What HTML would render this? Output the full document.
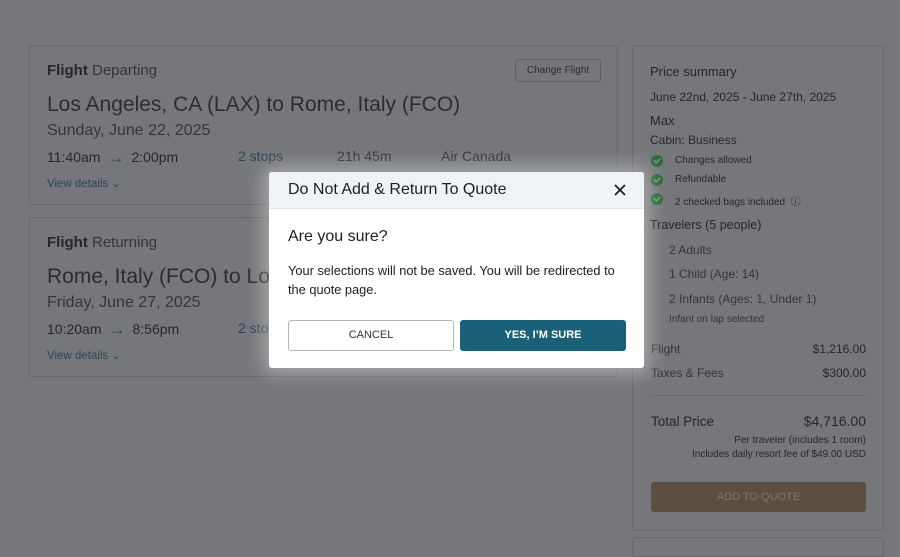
<!DOCTYPE html>
<html><head><style>
*{box-sizing:border-box;margin:0;padding:0}
body{width:900px;height:547px;overflow:hidden;background:#76777b;font-family:"Liberation Sans",sans-serif;color:#26272a;position:relative}
.card{position:absolute;border:1px solid #67686c;border-radius:3px;background:#76777b}
.abs{position:absolute;white-space:nowrap}
.g{color:#35363a}
.link{color:#2c4756}
.chk{position:absolute;width:12px;height:12px;border-radius:50%;background:#2f6b3c}
.chk:after{content:"";position:absolute;left:3px;top:3px;width:5px;height:3px;border-left:1.5px solid #9aaa9c;border-bottom:1.5px solid #9aaa9c;transform:rotate(-45deg)}
.modal{position:absolute;left:269px;top:172px;width:375px;height:196px;background:#fff;border-radius:3px;box-shadow:0 0 18px 6px rgba(255,255,255,.35)}
.arr{font-size:17px;margin:0 7px;vertical-align:-1px}
</style></head><body>
<div class="card" style="left:29px;top:45px;width:589px;height:160px"></div>
<div class="abs" style="left:47px;top:62px;font-size:15px"><span style="font-weight:600">Flight</span> <span class="g">Departing</span></div>
<div class="abs" style="left:515px;top:59px;width:86px;height:23px;border:1px solid #5f6064;border-radius:3px;font-size:10px;text-align:center;line-height:21px;color:#2c2d30">Change Flight</div>
<div class="abs" style="left:47px;top:93px;font-size:21px;color:#2c2d30">Los Angeles, CA (LAX) to Rome, Italy (FCO)</div>
<div class="abs g" style="left:47px;top:122px;font-size:16px">Sunday, June 22, 2025</div>
<div class="abs" style="left:47px;top:148px;font-size:14px">11:40am<span class="link arr">→</span>2:00pm</div>
<div class="abs link" style="left:238px;top:148px;font-size:14px">2 stops</div>
<div class="abs g" style="left:337px;top:148px;font-size:14px">21h 45m</div>
<div class="abs g" style="left:441px;top:148px;font-size:14px">Air Canada</div>
<div class="abs link" style="left:47px;top:176px;font-size:11.5px">View details &#8964;</div>

<div class="card" style="left:29px;top:217px;width:589px;height:160px"></div>
<div class="abs" style="left:47px;top:234px;font-size:15px"><span style="font-weight:600">Flight</span> <span class="g">Returning</span></div>
<div class="abs" style="left:47px;top:265px;font-size:21px;color:#2c2d30">Rome, Italy (FCO) to Lo</div>
<div class="abs g" style="left:47px;top:294px;font-size:16px">Friday, June 27, 2025</div>
<div class="abs" style="left:47px;top:320px;font-size:14px">10:20am<span class="link arr">→</span>8:56pm</div>
<div class="abs link" style="left:238px;top:320px;font-size:14px">2 sto</div>
<div class="abs link" style="left:47px;top:348px;font-size:11.5px">View details &#8964;</div>

<div class="card" style="left:632px;top:45px;width:252px;height:486px"></div>
<div class="card" style="left:632px;top:537px;width:252px;height:20px"></div>
<div class="abs" style="left:650px;top:64px;font-size:13px">Price summary</div>
<div class="abs" style="left:650px;top:90px;font-size:12px">June 22nd, 2025 - June 27th, 2025</div>
<div class="abs" style="left:650px;top:113px;font-size:13px">Max</div>
<div class="abs" style="left:650px;top:133px;font-size:12px">Cabin: Business</div>
<div class="chk" style="left:651px;top:155px"></div><div class="abs" style="left:675px;top:155px;font-size:10px">Changes allowed</div>
<div class="chk" style="left:651px;top:174px"></div><div class="abs" style="left:675px;top:174px;font-size:10px">Refundable</div>
<div class="chk" style="left:651px;top:193px"></div><div class="abs" style="left:675px;top:193px;font-size:10px">2 checked bags included &nbsp;ⓘ</div>
<div class="abs" style="left:650px;top:218px;font-size:12.5px">Travelers (5 people)</div>
<div class="abs g" style="left:669px;top:243px;font-size:12px">2 Adults</div>
<div class="abs g" style="left:669px;top:267px;font-size:12px">1 Child (Age: 14)</div>
<div class="abs g" style="left:669px;top:292px;font-size:12px">2 Infants (Ages: 1, Under 1)</div>
<div class="abs g" style="left:669px;top:314px;font-size:10px">Infant on lap selected</div>
<div class="abs g" style="left:651px;top:342px;font-size:12px">Flight</div>
<div class="abs" style="left:700px;top:342px;width:166px;text-align:right;font-size:12px">$1,216.00</div>
<div class="abs g" style="left:651px;top:366px;font-size:12px">Taxes &amp; Fees</div>
<div class="abs" style="left:700px;top:366px;width:166px;text-align:right;font-size:12px">$300.00</div>
<div class="abs" style="left:650px;top:395px;width:216px;height:1px;background:#67686c"></div>
<div class="abs" style="left:651px;top:414px;font-size:13.5px">Total Price</div>
<div class="abs" style="left:700px;top:413px;width:166px;text-align:right;font-size:14px">$4,716.00</div>
<div class="abs" style="left:650px;top:435px;width:216px;text-align:right;font-size:10px">Per traveler (includes 1 room)</div>
<div class="abs" style="left:650px;top:449px;width:216px;text-align:right;font-size:10px">Includes daily resort fee of $49.00 USD</div>
<div class="abs" style="left:651px;top:482px;width:215px;height:30px;background:#5a4f40;border-radius:3px;color:#7d7566;font-size:11px;text-align:center;line-height:30px">ADD TO QUOTE</div>

<div class="modal">
 <div style="height:37px;background:#eff2f6;border-radius:3px 3px 0 0;border-bottom:1px solid #e3e6ea;position:relative">
  <div class="abs" style="left:19px;top:9px;font-size:16px;color:#1d1e21">Do Not Add &amp; Return To Quote</div>
  <svg class="abs" style="left:345px;top:12px" width="12" height="12" viewBox="0 0 12 12"><path d="M1 1L11 11M11 1L1 11" stroke="#1d1e21" stroke-width="1.8"/></svg>
 </div>
 <div class="abs" style="left:19px;top:56px;font-size:16px;color:#1d1e21">Are you sure?</div>
 <div class="abs" style="left:19px;top:89px;font-size:12.8px;line-height:19px;color:#1d1e21;white-space:normal;width:345px">Your selections will not be saved. You will be redirected to the quote page.</div>
 <div class="abs" style="left:19px;top:148px;width:166px;height:31px;border:1px solid #b5b6b9;border-radius:3px;text-align:center;line-height:29px;font-size:11px;color:#333">CANCEL</div>
 <div class="abs" style="left:191px;top:148px;width:166px;height:31px;background:#1b6079;border-radius:3px;text-align:center;line-height:31px;font-size:11px;color:#fff;font-weight:bold">YES, I’M SURE</div>
</div>
</body></html>
